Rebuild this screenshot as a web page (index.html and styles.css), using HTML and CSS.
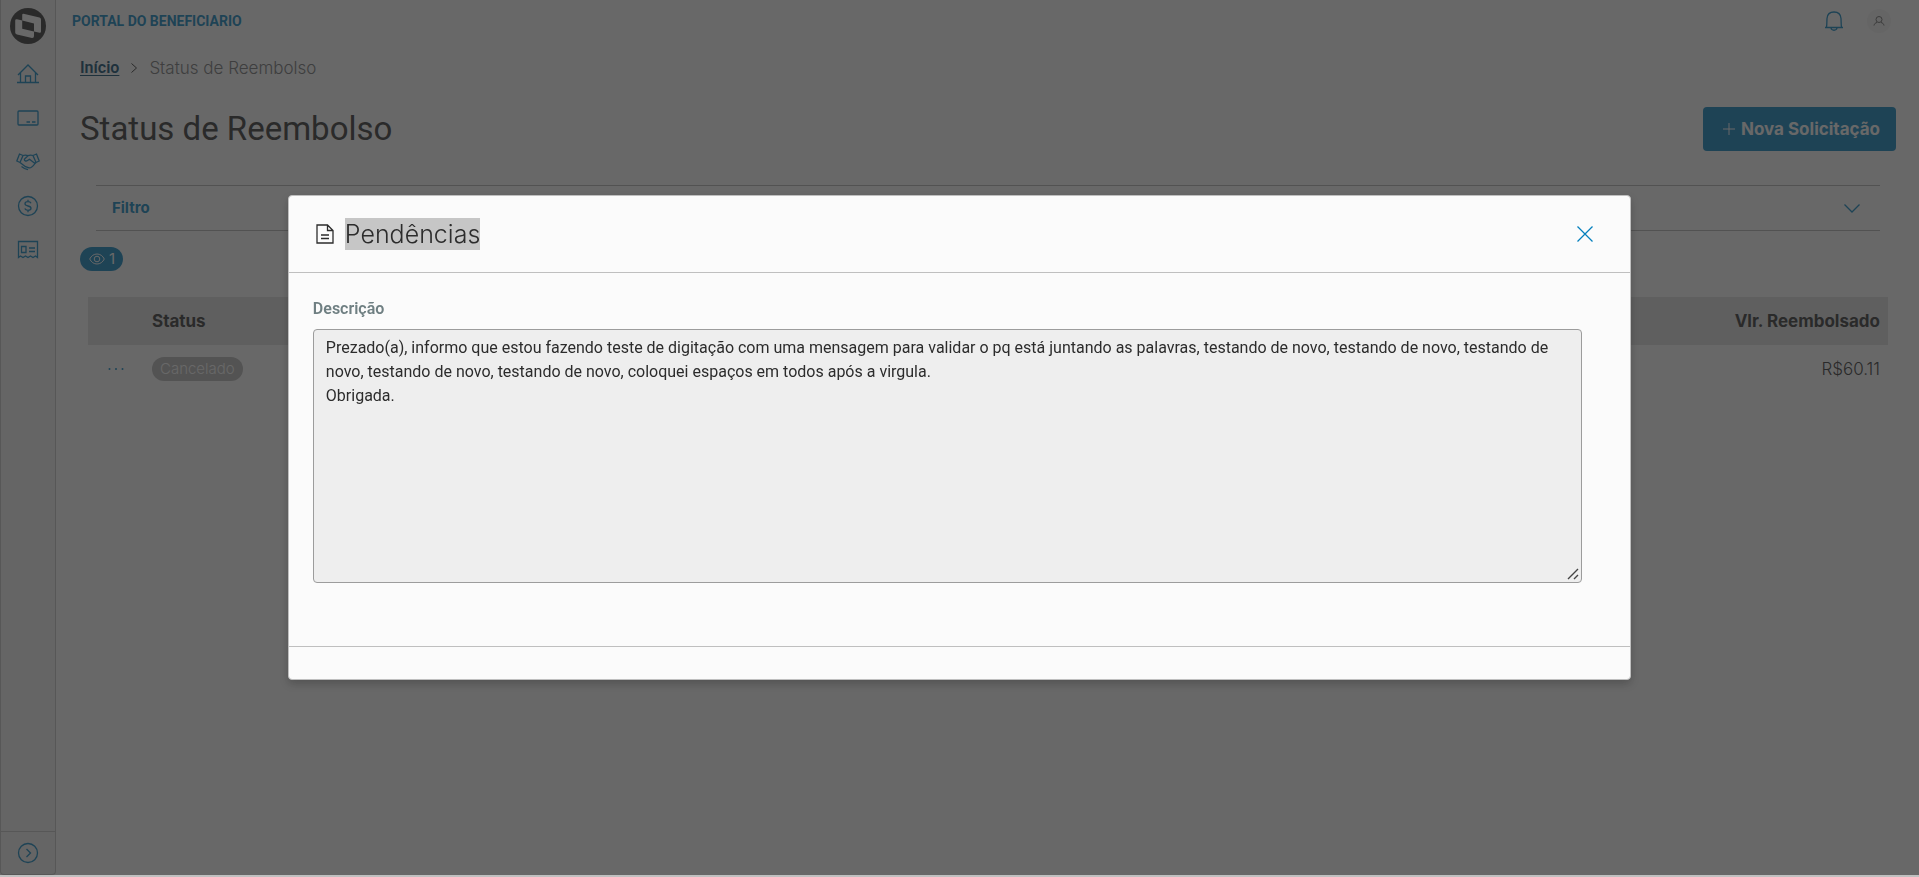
FILE: index.html
```html
<!DOCTYPE html>
<html lang="pt-BR">
<head>
  <meta charset="UTF-8" />
  <meta name="viewport" content="width=device-width, initial-scale=1" />
  <title>Status de Reembolso - Portal do Beneficiario</title>
  <link rel="stylesheet" href="styles.css">
</head>
<body>
  <div class="app">
    <nav class="sidebar" aria-label="Menu">
      <svg class="logo" viewBox="0 0 36 36" aria-hidden="true">
        <circle cx="18" cy="18" r="18" fill="#2c2c2c" />
        <path fill="#fbfbfb" fill-rule="evenodd" d="M13.500 5.800 29.500 9.500Q31 10 31 11.500V23.500Q31 25 29.500 24.800L24 23.600V28Q24 30.200 22 30L7 26.500Q5.200 26 5.200 24.500V12.500Q5.200 11 7 11.300L12.200 12.600V7Q12.200 5.600 13.500 5.800ZM12.200 12.600 24 15.500V23.600L12.200 20.800Z" />
      </svg>
      <ul class="menu">
        <li><a href="#" aria-label="Início">
          <svg class="icon" viewBox="0 0 22 22"><path d="M1 12 11 2l10 10M3.500 9.500V19M18.500 9.500V19M0 19.500h22M8.500 19v-6h5v6" /></svg>
        </a></li>
        <li><a href="#" aria-label="Carteirinha">
          <svg class="icon" viewBox="0 0 22 22"><rect x="1" y="4" width="20" height="14" rx="1" /><path d="M9.500 15h3.500M15 15h3.500" /></svg>
        </a></li>
        <li><a href="#" aria-label="Acordos">
          <svg class="icon icon-wide" viewBox="0 0 24 22"><path d="M3.500 3 7 4.500 4 11.500 .8 10zM20.500 3 17 4.500l3 7L23.200 10zM7 4.500c2-.8 3-.8 5 .2 2-1 3-1 5-.2M12 4.700 8.500 8c-.5 1.800 1.500 2.500 3 1.500l2-1.300 5.500 4.300M4 11.500l5.500 4.200 3.500 1.200c2 .2 4-1.500 6-4.400l1-1M5.500 15.500l3 2 3.500 1.200" /></svg>
        </a></li>
        <li><a href="#" aria-label="Reembolso">
          <svg class="icon" viewBox="0 0 22 22"><circle cx="11" cy="11" r="9.500" /><path d="M14 8.200C13.500 7 12.500 6.700 11 6.700c-1.800 0-3 .8-3 2.100 0 3 6 1.400 6 4.400 0 1.300-1.200 2.100-3 2.100-1.600 0-2.700-.5-3.200-1.700M11 4.800v1.900M11 15.300v1.900" /></svg>
        </a></li>
        <li><a href="#" aria-label="Boletos">
          <svg class="icon" viewBox="0 0 22 22"><path d="M1.500 18.500V2.500h19v16l-2-1.500-2.500 1.500-2.500-1.500-2.500 1.500L8.500 17 6 18.500 3.500 17zM4.500 7.500H9v6H4.500zM12 9h6M12 12.500h6" /></svg>
        </a></li>
      </ul>
      <button class="menu-toggle" type="button" aria-label="Expandir menu">
        <svg class="icon" viewBox="0 0 22 22"><circle cx="11" cy="11" r="9.500" /><path d="m9.500 7 4 4-4 4" /></svg>
      </button>
    </nav>

    <div class="main">
      <header class="topbar">
        <span class="portal-name">PORTAL DO BENEFICIARIO</span>
        <div class="topbar-actions">
          <button class="icon-button" type="button" aria-label="Notificações">
            <svg class="icon" viewBox="0 0 22 22"><path d="M2 17.500h18M3.500 17.500C4 14 3.800 11 4 8.500 4.300 4.500 7 2 11 2s6.700 2.500 7 6.500c.2 2.500 0 5.500.5 9M8 18c.5 3 5.500 3 6 0" /></svg>
          </button>
          <button class="avatar" type="button" aria-label="Perfil">
            <svg viewBox="0 0 12 12"><circle cx="6" cy="4.500" r="3" /><path d="M1 10.500C1.500 8.500 2.500 7.800 4 7.500M11 10.500C10.500 8.500 9.500 7.800 8 7.500" /></svg>
          </button>
        </div>
      </header>

      <main class="page">
        <nav class="breadcrumb" aria-label="Navegação">
          <a href="#">Início</a>
          <svg viewBox="0 0 6 10" aria-hidden="true"><path d="m.5.5 5 4.500-5 4.500" /></svg>
          <span>Status de Reembolso</span>
        </nav>

        <div class="page-header">
          <h1>Status de Reembolso</h1>
          <button class="btn-primary" type="button">
            <svg viewBox="0 0 12 12" aria-hidden="true"><path d="M6 0v12M0 6h12" /></svg>
            Nova Solicitação
          </button>
        </div>

        <button class="filter" type="button">
          Filtro
          <svg viewBox="0 0 16 9" aria-hidden="true"><path d="m.5.5 7.500 7.500 7.500-7.500" /></svg>
        </button>

        <div class="counter">
          <svg viewBox="0 0 16 12" aria-hidden="true"><path d="M.7 6C2.300 2.800 4.800 1 8 1s5.700 1.800 7.300 5C13.700 9.200 11.200 11 8 11S2.300 9.200.7 6z" /><circle cx="8" cy="6" r="2.800" /></svg>
          1
        </div>

        <table class="table">
          <thead>
            <tr>
              <th class="col-actions" aria-label="Ações"></th>
              <th>Status</th>
              <th class="col-value">Vlr. Reembolsado</th>
            </tr>
          </thead>
          <tbody>
            <tr>
              <td class="col-actions">
                <button class="row-menu" type="button" aria-label="Ações">
                  <svg viewBox="0 0 16 4"><circle cx="1.500" cy="2" r="1" /><circle cx="8" cy="2" r="1" /><circle cx="14.500" cy="2" r="1" /></svg>
                </button>
              </td>
              <td><span class="tag">Cancelado</span></td>
              <td class="col-value">R$60.11</td>
            </tr>
          </tbody>
        </table>
      </main>
    </div>
  </div>

  <div class="overlay">
    <div class="modal" role="dialog" aria-modal="true" aria-labelledby="modalTitle">
      <div class="modal-header">
        <svg class="modal-icon" viewBox="0 0 18 20" aria-hidden="true"><path d="M1 1h10.500L17 6.500V19H1zM11.500 1v5.500H17M5 11h8M5 14.500h8" /></svg>
        <h2 id="modalTitle"><span class="selected">Pendências</span></h2>
        <button class="modal-close" type="button" aria-label="Fechar">
          <svg viewBox="0 0 16 16"><path d="m.5.5 15 15M15.500.5l-15 15" /></svg>
        </button>
      </div>
      <div class="modal-body">
        <label for="descricao">Descrição</label>
        <textarea id="descricao" name="descricao" readonly>Prezado(a), informo que estou fazendo teste de digitação com uma mensagem para validar o pq está juntando as palavras, testando de novo, testando de novo, testando de novo, testando de novo, testando de novo, coloquei espaços em todos após a virgula.
Obrigada.</textarea>
      </div>
      <div class="modal-footer"></div>
    </div>
  </div>
</body>
</html>
```
FILE: styles.css
```css
:root {
  --primary: #047fbd;
  --text: #2c2c2c;
  --heading: "Inter", sans-serif;
  --body: "Roboto", sans-serif;
}
* {
  box-sizing: border-box;
}
body {
  margin: 0;
  padding-bottom: 2px;
  background: #c0c0c0;
  color: var(--text);
  font-family: var(--body);
  font-size: 16px;
  line-height: 24px;
}
button {
  padding: 0;
  border: none;
  background: none;
  color: inherit;
  font: inherit;
  cursor: pointer;
}
svg {
  display: block;
  fill: none;
  stroke: currentColor;
}
.app {
  display: flex;
  min-height: calc(100vh - 2px);
  background: #fbfbfb;
}

/* sidebar */
.sidebar {
  display: flex;
  flex-direction: column;
  align-items: center;
  width: 56px;
  padding-top: 8px;
  border: 1px solid #c4c4c4;
  border-top: none;
  border-radius: 0 0 4px 4px;
  background: #f0f0f0;
  color: var(--primary);
}
.logo {
  width: 36px;
  height: 36px;
  stroke: none;
}
.menu {
  flex: 1;
  margin: 8px 0 0;
  padding: 0;
  list-style: none;
}
.menu a {
  display: flex;
  align-items: center;
  justify-content: center;
  height: 44px;
  color: var(--primary);
}
.icon {
  width: 22px;
  height: 22px;
  stroke-width: 1.3;
}
.icon-wide {
  width: 24px;
}
.menu-toggle {
  display: flex;
  align-items: center;
  justify-content: center;
  width: 100%;
  height: 43px;
  border-top: 1px solid #c4c4c4;
  color: var(--primary);
}

/* top bar */
.main {
  flex: 1;
  min-width: 0;
}
.topbar {
  display: flex;
  align-items: center;
  justify-content: space-between;
  height: 42px;
  padding: 0 28px 0 16px;
}
.portal-name {
  color: var(--primary);
  font-size: 14px;
  font-weight: 700;
}
.topbar-actions {
  display: flex;
  align-items: center;
  gap: 22px;
}
.icon-button {
  color: var(--primary);
}
.avatar {
  display: flex;
  align-items: center;
  justify-content: center;
  width: 24px;
  height: 24px;
  border-radius: 50%;
  background: #f0f0f0;
  color: #666;
}
.avatar svg {
  width: 12px;
  height: 12px;
}

/* page */
.page {
  padding: 14px 23px 24px 24px;
}
.breadcrumb {
  display: flex;
  align-items: center;
  gap: 12px;
}
.breadcrumb a {
  color: #064469;
  font-weight: 600;
  text-underline-offset: 2px;
}
.breadcrumb svg {
  width: 6px;
  height: 10px;
}
.breadcrumb span {
  color: #6e7072;
  font-family: var(--heading);
  font-size: 17px;
  font-weight: 300;
}
.page-header {
  display: flex;
  align-items: center;
  justify-content: space-between;
  margin-top: 27px;
}
h1 {
  margin: 0;
  font-size: 33px;
  font-weight: 400;
  line-height: 40px;
}
.btn-primary {
  display: flex;
  align-items: center;
  justify-content: center;
  gap: 6px;
  height: 44px;
  padding: 0 16px 0 20px;
  border-radius: 4px;
  background: var(--primary);
  color: #fbfbfb;
  font-family: var(--heading);
  font-size: 17px;
  font-weight: 700;
}
.btn-primary svg {
  width: 12px;
  height: 12px;
}
.filter {
  display: flex;
  align-items: center;
  justify-content: space-between;
  width: calc(100% - 32px);
  height: 46px;
  margin: 34px 16px 0;
  padding: 0 20px 0 16px;
  border-top: 1px solid #b2b2b2;
  border-bottom: 1px solid #b2b2b2;
  color: var(--primary);
  font-family: var(--heading);
  font-size: 15px;
  font-weight: 700;
}
.filter svg {
  width: 16px;
  height: 9px;
  stroke-width: 1.3;
}
.counter {
  display: inline-flex;
  align-items: center;
  gap: 4px;
  height: 24px;
  margin-top: 16px;
  padding: 0 8px 0 9px;
  border-radius: 12px;
  background: var(--primary);
  color: #fbfbfb;
  font-family: var(--heading);
  font-size: 15px;
}
.counter svg {
  width: 16px;
  height: 12px;
}
.table {
  width: calc(100% - 16px);
  margin: 25px 8px 0;
  border-collapse: collapse;
  font-family: var(--heading);
  font-size: 17px;
}
.table th,
.table td {
  height: 48px;
  padding: 0 8px;
  text-align: left;
}
.table th {
  background: #dedede;
  font-weight: 700;
}
.table td {
  font-weight: 300;
}
.table .col-actions {
  width: 56px;
  padding: 0 20px;
}
.table .col-value {
  text-align: right;
}
.row-menu {
  display: block;
  color: var(--primary);
}
.row-menu svg {
  width: 16px;
  height: 4px;
  fill: currentColor;
  stroke: none;
}
.tag {
  display: block;
  width: max-content;
  height: 24px;
  padding: 0 8px;
  border-radius: 12px;
  background: #b4b4b4;
  color: #fbfbfb;
  font-size: 15px;
}

/* modal */
.overlay {
  position: fixed;
  inset: 0 0 2px;
  display: flex;
  align-items: center;
  justify-content: center;
  background: rgba(42, 42, 42, 0.7);
}
.modal {
  width: 70%;
  border: 1px solid #bfbfbf;
  border-radius: 4px;
  background: #fbfbfb;
  box-shadow: 0 4px 8px rgba(0, 0, 0, 0.2);
}
.modal-header {
  display: flex;
  align-items: center;
  height: 77px;
  padding: 0 37px 0 27px;
  border-bottom: 1px solid #bfbfbf;
}
.modal-icon {
  width: 18px;
  height: 20px;
  stroke-width: 1.3;
}
h2 {
  flex: 1;
  margin: 0 0 0 11px;
  font-family: var(--heading);
  font-size: 25px;
  font-weight: 300;
  line-height: 32px;
}
.selected {
  display: inline-block;
  background: #c6c6c6;
}
.modal-close {
  color: var(--primary);
}
.modal-close svg {
  width: 16px;
  height: 16px;
  stroke-width: 1.3;
}
.modal-body {
  padding: 24px 48px 63px 24px;
}
label {
  display: block;
  margin-bottom: 8px;
  color: #6f7f82;
  font-weight: 600;
}
textarea {
  display: block;
  width: 100%;
  height: 254px;
  padding: 6px 12px;
  border: 1px solid #9c9c9c;
  border-radius: 4px;
  outline: none;
  background: #eee;
  color: var(--text);
  font: inherit;
  resize: both;
}
textarea::-webkit-resizer {
  background: url("data:image/svg+xml,%3Csvg xmlns='http://www.w3.org/2000/svg' width='15' height='15'%3E%3Cpath d='M2 12 12 2M8 12l4-4' stroke='%23444' stroke-width='1.4'/%3E%3C/svg%3E") no-repeat;
}
.modal-footer {
  height: 33px;
  border-top: 1px solid #bfbfbf;
}
```
